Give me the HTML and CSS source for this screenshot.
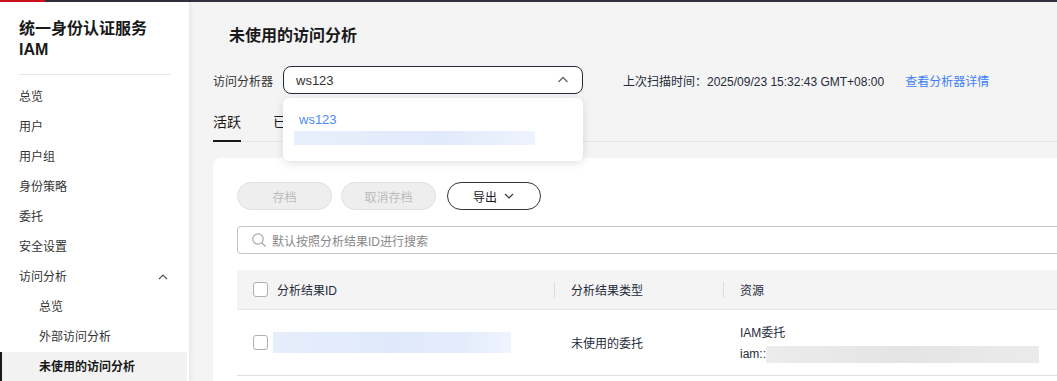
FILE: index.html
```html
<!DOCTYPE html>
<html>
<head>
    <title>未使用的访问分析</title>
    <meta name="viewport" content="width=device-width, initial-scale=1.0">
    <link rel="stylesheet" href="styles.css">
</head>
<body>
    <div class="topbar"><span class="topbar-brand"></span></div>
    <div class="layout">
        <div class="sidebar">
            <div class="sidebar-title">统一身份认证服务<br>IAM</div>
            <div class="sidebar-divider"></div>
            <div class="menu-item">总览</div>
            <div class="menu-item">用户</div>
            <div class="menu-item">用户组</div>
            <div class="menu-item">身份策略</div>
            <div class="menu-item">委托</div>
            <div class="menu-item">安全设置</div>
            <div class="menu-item menu-group">访问分析
                <svg class="menu-arrow" width="12" height="12" viewBox="0 0 12 12"><path d="M2 8 L6 4 L10 8" fill="none" stroke="#555" stroke-width="1.2"/></svg>
            </div>
            <div class="menu-item sub">总览</div>
            <div class="menu-item sub">外部访问分析</div>
            <div class="menu-item sub active">未使用的访问分析</div>
        </div>

        <div class="main">
            <h1 class="page-title">未使用的访问分析</h1>

            <div class="analyzer-row">
                <span class="analyzer-label">访问分析器</span>
                <div class="select-wrap">
                    <div class="select">
                        <span>ws123</span>
                        <svg width="14" height="14" viewBox="0 0 14 14"><path d="M2.5 9 L7 4.5 L11.5 9" fill="none" stroke="#666" stroke-width="1.3"/></svg>
                    </div>
                    <div class="dropdown">
                        <div class="dropdown-name">ws123</div>
                        <div class="dropdown-blur"></div>
                    </div>
                </div>
                <span class="scan-time">上次扫描时间：2025/09/23 15:32:43 GMT+08:00</span>
                <a class="detail-link" href="#">查看分析器详情</a>
            </div>

            <div class="tabs">
                <div class="tab active">活跃</div>
                <div class="tab">已归档</div>
            </div>

            <div class="card">
                <div class="toolbar">
                    <button class="btn disabled">存档</button>
                    <button class="btn disabled">取消存档</button>
                    <button class="btn outline">导出
                        <svg width="12" height="12" viewBox="0 0 12 12"><path d="M2 4 L6 8 L10 4" fill="none" stroke="#333" stroke-width="1.1"/></svg>
                    </button>
                </div>

                <div class="search">
                    <svg width="16" height="16" viewBox="0 0 16 16"><circle cx="7" cy="7" r="5.2" fill="none" stroke="#aaa" stroke-width="1.2"/><path d="M11 11 L14.5 14.5" stroke="#aaa" stroke-width="1.2"/></svg>
                    <span>默认按照分析结果ID进行搜索</span>
                </div>

                <div class="table">
                    <div class="table-row table-head">
                        <div class="cell col-id"><span class="checkbox"></span>分析结果ID</div>
                        <div class="cell col-type"><span class="sep"></span>分析结果类型</div>
                        <div class="cell col-res"><span class="sep"></span>资源</div>
                    </div>
                    <div class="table-row table-body">
                        <div class="cell col-id"><span class="checkbox"></span><span class="blur-id"></span></div>
                        <div class="cell col-type">未使用的委托</div>
                        <div class="cell col-res">
                            <div class="res-lines">
                                <div>IAM委托</div>
                                <div class="res-urn">iam::<span class="blur-urn"></span></div>
                            </div>
                        </div>
                    </div>
                </div>
            </div>
        </div>
    </div>
</body>
</html>
```

FILE: styles.css
```css
* {
    box-sizing: border-box;
}

body {
    margin: 0;
    font-family: "Liberation Sans", "Noto Sans CJK SC", sans-serif;
    font-size: 12px;
    color: #252b3a;
    background-color: #f4f4f4;
    height: 381px;
    overflow: hidden;
}

.topbar {
    height: 2px;
    background-color: #2f323a;
    display: flex;
}

.topbar-brand {
    width: 45px;
    background-color: #d0111b;
}

.layout {
    display: flex;
    height: 379px;
}

.sidebar {
    width: 189px;
    flex-shrink: 0;
    background-color: #ffffff;
    box-shadow: 2px 0 4px rgba(0, 0, 0, 0.06);
    position: relative;
    z-index: 2;
}

.sidebar-title {
    padding: 16px 0 0 19px;
    font-size: 16px;
    font-weight: bold;
    line-height: 21px;
    color: #191919;
}

.sidebar-divider {
    margin: 14px 18px 7px 19px;
    height: 1px;
    background-color: #e8e8e8;
}

.menu-item {
    height: 30px;
    line-height: 30px;
    padding-left: 19px;
    color: #333;
    font-size: 12px;
}

.menu-group {
    display: flex;
    align-items: center;
    justify-content: space-between;
    padding-right: 20px;
}

.menu-item.sub {
    padding-left: 39px;
}

.menu-item.active {
    margin-right: 2px;
    background-color: #f2f2f2;
    font-weight: bold;
    color: #191919;
    border-left: 2px solid #191919;
    padding-left: 37px;
}

.main {
    flex: 1;
    padding-left: 24px;
    overflow: hidden;
    min-width: 0;
}

.page-title {
    margin: 0;
    padding: 23px 0 0 16px;
    font-size: 16px;
    line-height: 22px;
    font-weight: bold;
    color: #191919;
}

.analyzer-row {
    display: flex;
    align-items: center;
    margin-top: 19px;
    height: 28px;
}

.analyzer-label {
    color: #333;
    width: 70px;
}

.select-wrap {
    position: relative;
    width: 300px;
}

.select {
    height: 28px;
    border: 1px solid #252b3a;
    border-radius: 8px;
    background-color: #fff;
    display: flex;
    align-items: center;
    justify-content: space-between;
    padding: 0 12px;
    font-size: 13px;
    color: #333;
}

.dropdown {
    position: absolute;
    top: 32px;
    left: 0;
    width: 300px;
    height: 63px;
    background-color: #fff;
    border-radius: 6px;
    box-shadow: 0 2px 10px rgba(0, 0, 0, 0.12);
    padding: 14px 0 0 16px;
    z-index: 5;
}

.dropdown-name {
    font-size: 13px;
    color: #4d8df6;
    line-height: 16px;
}

.dropdown-blur {
    margin: 3px 0 0 -5px;
    width: 241px;
    height: 14px;
    background: linear-gradient(90deg, #e8effc, #e1eafb 60%, #eef3fd);
}

.scan-time {
    margin-left: 40px;
    color: #252b3a;
}

.detail-link {
    margin-left: 21px;
    color: #3e7ef5;
    text-decoration: none;
}

.tabs {
    display: flex;
    margin-top: 18px;
    border-bottom: 1px solid #e6e6e6;
    height: 30px;
}

.tab {
    font-size: 14px;
    color: #191919;
    margin-right: 32px;
    line-height: 20px;
}

.tab.active {
    border-bottom: 2px solid #191919;
    height: 30px;
}

.card {
    margin-top: 16px;
    width: 900px;
    background-color: #fff;
    border-radius: 8px 0 0 0;
    padding: 24px 0 0 24px;
    height: 240px;
}

.toolbar {
    display: flex;
    gap: 9px;
}

.btn {
    height: 28px;
    border-radius: 14px;
    font-family: inherit;
    font-size: 12px;
    display: flex;
    align-items: center;
    justify-content: center;
    gap: 6px;
    padding: 0;
}

.btn.disabled {
    width: 95px;
    background-color: #eeeeee;
    border: 1px solid #e0e0e0;
    color: #bbbbbb;
}

.btn.outline {
    margin-left: 2px;
    width: 94px;
    background-color: #fff;
    border: 1px solid #333;
    color: #191919;
}

.search {
    margin-top: 16px;
    height: 28px;
    border: 1px solid #c2c2c2;
    border-radius: 4px;
    display: flex;
    align-items: center;
    gap: 5px;
    padding-left: 13px;
    color: #888;
}

.table {
    margin-top: 16px;
}

.table-row {
    display: flex;
    border-bottom: 1px solid #e8e8e8;
}

.table-head {
    height: 40px;
    background-color: #f4f4f4;
    color: #252b3a;
}

.table-body {
    height: 66px;
    border-bottom: 1px solid #dfdfdf;
}

.cell {
    display: flex;
    align-items: center;
    position: relative;
}

.col-id {
    width: 317px;
    padding-left: 16px;
}

.col-type {
    width: 169px;
    padding-left: 17px;
}

.col-res {
    flex: 1;
    padding-left: 17px;
}

.sep {
    position: absolute;
    left: 0;
    top: 12px;
    width: 1px;
    height: 16px;
    background-color: #dcdcdc;
}

.checkbox {
    width: 15px;
    height: 15px;
    border: 1px solid #adb0b8;
    border-radius: 3px;
    background-color: #fff;
    margin-right: 9px;
}

.table-body .checkbox {
    margin-right: 5px;
}

.blur-id {
    width: 238px;
    height: 21px;
    background: linear-gradient(90deg, #e6eefc, #e0e9fb 50%, #e4ecfc 80%, #eff4fd);
}

.res-lines {
    line-height: 21px;
    margin-top: 2px;
}

.res-urn {
    display: flex;
    align-items: center;
}

.blur-urn {
    width: 273px;
    height: 17px;
    background: linear-gradient(90deg, #ececec, #e4e4e4 50%, #ebebeb);
}
```
